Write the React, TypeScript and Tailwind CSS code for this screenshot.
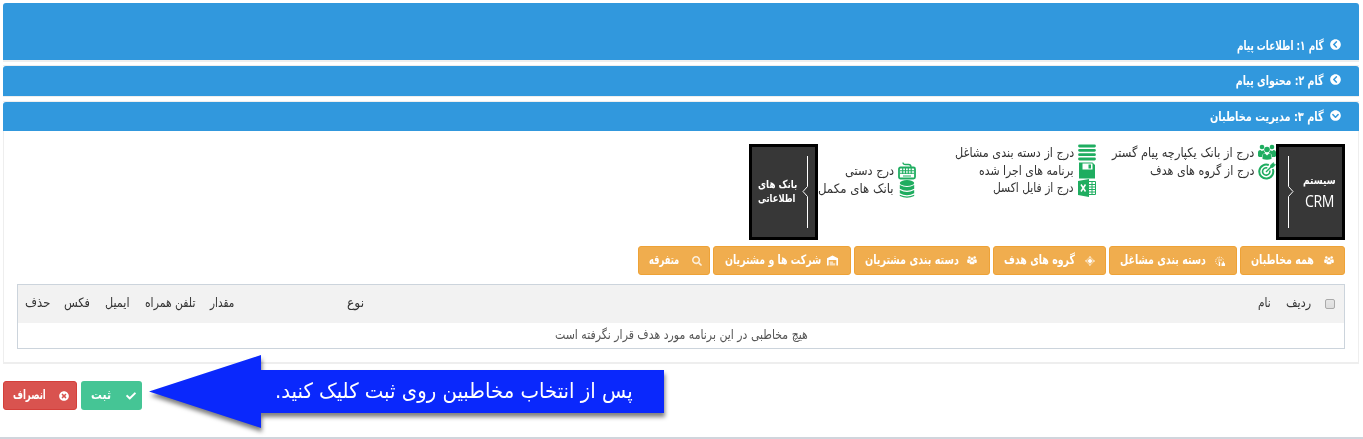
import React, { useLayoutEffect, useRef, useState } from "react";
import { FaCheck, FaSearch, FaChevronCircleLeft, FaChevronCircleDown, FaTimesCircle } from "react-icons/fa";

/** One line of text, condensed or widened horizontally to the given width. */
function Fit({ w, className = "", children }: { w: number; className?: string; children: string }) {
  const ref = useRef<HTMLSpanElement>(null);
  const [scale, setScale] = useState(1);
  useLayoutEffect(() => {
    if (ref.current) setScale(w / ref.current.offsetWidth);
  }, [w]);
  return (
    <span className={`flex shrink-0 items-center justify-start whitespace-nowrap ${className}`} style={{ width: w }}>
      <span ref={ref} className="inline-block shrink-0 origin-right" style={{ transform: `scaleX(${scale})` }}>
        {children}
      </span>
    </span>
  );
}

const Group = ({ className = "h-[17px] w-[18px]" }: { className?: string }) => (
  <svg viewBox="0 0 18 17" className={className} fill="currentColor">
    <circle cx="4" cy="3" r="2.3" /><circle cx="14" cy="3" r="2.3" /><circle cx="9" cy="5.5" r="2.8" />
    <path d="M0 12V8.500Q0 6 2.500 6l1.500 1.300L5.300 6q.8 1.700 2 3Q4 9.500 4 13H1zM18 12V8.500Q18 6 15.500 6L14 7.300 12.700 6q-.8 1.700-2 3 3.300.5 3.300 4h3z" />
    <path d="M4.500 15v-2.500Q4.500 9.700 7 9.500l2 2 2-2q2.500.2 2.500 3V15Q9 16.500 4.500 15z" />
  </svg>
);
const Target = () => (
  <svg viewBox="0 0 18 18" className="h-[18px] w-[18px]" fill="none" stroke="currentColor">
    <path d="M14.800 7a7 7 0 1 1-4-4" strokeWidth="2" /><path d="M11.800 8.500a3.700 3.700 0 1 1-2.500-2.600" strokeWidth="1.600" />
    <path d="M8 10l6.500-6.500" strokeWidth="1.500" /><path d="M12.500 5.500V3L15.500.5l.5 1.700 1.700.4-2.700 2.900z" fill="currentColor" strokeWidth=".5" />
  </svg>
);
const Lines = () => (
  <svg viewBox="0 0 18 17" className="h-[17px] w-[18px]" stroke="currentColor" strokeWidth="2.800" strokeLinecap="round">
    <path d="M1.500 2h15M1.500 6.300h15M1.500 10.700h15M1.500 15h15" />
  </svg>
);
const Disk = () => (
  <svg viewBox="0 0 18 17" className="h-[17px] w-[18px]" fill="currentColor">
    <path fillRule="evenodd" d="M1 .5h13.500L17 3v13.500H1zM4.500 1.500v6h10v-6zM10.500 2.500h2.500v4h-2.500z" />
  </svg>
);
const Excel = () => (
  <svg viewBox="0 0 18 18" className="h-[18px] w-[18px]" fill="currentColor">
    <path d="M0 2L11 0v18L0 16z" /><path d="M3 5.500l4.500 7M7.500 5.500L3 12.500" stroke="white" strokeWidth="1.500" />
    <path fill="none" stroke="currentColor" d="M11 2.500h6.500v13H11M11 5.500h6M11 8h6M11 10.500h6M11 13h6M14 3v12" />
  </svg>
);
const Keyboard = () => (
  <svg viewBox="0 0 18 18" className="h-[18px] w-[18px]" fill="none" stroke="currentColor">
    <path d="M5 .5q0 2 2.500 2h3Q13 2.500 13 5" strokeWidth="1.300" /><rect x="1" y="5.500" width="16" height="11" rx="1.500" strokeWidth="1.800" />
    <path d="M2 8.700h14M2 11.300h14M5 14h8M4.700 6v6M7.500 6v6M10.300 6v6M13.200 6v6" strokeWidth="1.100" />
  </svg>
);
const Database = () => (
  <svg viewBox="0 0 18 18" className="h-[18px] w-[18px]" fill="currentColor">
    <ellipse cx="9" cy="3" rx="7.200" ry="3" />
    <path d="M1.800 5q7.200 3.800 14.400 0v3.700q-7.200 4-14.400 0zM1.800 10q7.200 3.800 14.400 0v3.300q-7.200 4-14.400 0zM1.800 14.700q7.200 3.600 14.400 0V16q-7.200 3.500-14.400 0z" />
  </svg>
);
const Diamond = () => (
  <svg viewBox="0 0 10 10" className="size-[10px]" fill="none" stroke="currentColor">
    <path d="M5 .7L9.300 5 5 9.300.7 5z" strokeWidth=".8" opacity=".75" /><path d="M5 0v10M0 5h10" strokeWidth=".8" opacity=".8" />
    <circle cx="5" cy="5" r="2" fill="currentColor" stroke="none" />
  </svg>
);
const Jobs = () => (
  <svg viewBox="0 0 10 10" className="size-[10px]" fill="none" stroke="currentColor">
    <path d="M3.500 9A4 4 0 1 1 8.500 4" strokeDasharray="1.200 .8" opacity=".8" /><path d="M4 2.500v3.500M6 3v2" opacity=".7" />
    <path d="M4.500 6v4" strokeWidth="1.300" /><path d="M8.300 5.500V10M6.500 8h3.500M6.500 9.500H10" strokeWidth="1.300" />
  </svg>
);
const Building = () => (
  <svg viewBox="0 0 10 10" className="size-[11px]" fill="currentColor">
    <path fillRule="evenodd" d="M0 3L5 .5 10 3v6.500H8.500V4.500h-7v5H0z" /><path d="M2.500 6h3v1.500h2v2h-5z" opacity=".6" />
  </svg>
);

function Entry({ icon, w, children }: { icon: React.ReactNode; w: number; children: string }) {
  return (
    <div className="flex h-[17.7px] items-center text-[#1fad60]">
      {icon}
      <Fit w={w} className="mr-1 pb-[1px] text-[13px] text-[#333]">{children}</Fit>
    </div>
  );
}

function StepBar({ tall, open, w, children }: { tall?: boolean; open?: boolean; w: number; children: string }) {
  return (
    <div className={`flex items-end rounded-t-[3px] bg-[#3198dd] pr-[18px] text-white ${tall ? "h-[57px]" : open ? "h-[29px]" : "h-[30px] pb-[1px]"}`}>
      <div className="flex h-[29px] items-center">
        {open ? <FaChevronCircleDown className="mb-[2px] size-[11px]" /> : <FaChevronCircleLeft className="mb-[2px] size-[11px]" />}
        <Fit w={w} className="mr-[6px] pb-[1px] text-[13px] font-bold">{children}</Fit>
      </div>
    </div>
  );
}

function Filter({ width, icon, w, gap, children }: { width: string; icon: React.ReactNode; w: number; gap: string; children: string }) {
  return (
    <button className={`flex h-[29px] items-center rounded-[3px] border border-[#eea236] bg-[#f0ad4e] pr-[9px] text-white ${width}`}>
      {icon}
      <Fit w={w} className={`pb-[2px] text-[13px] font-bold ${gap}`}>{children}</Fit>
    </button>
  );
}

function Bracket({ flip }: { flip?: boolean }) {
  return (
    <svg viewBox="0 0 8 72" className={`h-[72px] w-2 ${flip ? "" : "-scale-x-100"}`} fill="none" stroke="white">
      <path d="M6.500 0v30.500l-4.500 5 4.500 5V72" />
    </svg>
  );
}

export default function App() {
  return (
    <div dir="rtl" className="relative h-[439px] w-[1363px] overflow-hidden bg-white pt-[3px] pl-[3px] pr-[4px] font-['DejaVu_Sans','Noto_Sans',sans-serif] leading-none">
      <div className="border-b-2 border-[#eee]"><StepBar tall w={87}>گام ۱: اطلاعات پیام</StepBar></div>
      <div className="mt-[3px] border-y border-[#eee]"><StepBar w={88}>گام ۲: محتوای پیام</StepBar></div>
      <div className="mt-1 h-[263px] border-b-2 border-[#eee] border-t border-t-[#eee]">
        <StepBar open w={114}>گام ۳: مدیریت مخاطبان</StepBar>
        <div className="h-[231px] border-x border-[#eee] px-[13px] pt-[13px]">
          <div className="flex h-24">
            <div className="flex w-[69px] shrink-0 items-center border-[3px] border-black bg-[#373737] text-white">
              <div className="mr-[6px] flex w-[34px] flex-col items-center">
                <Fit w={33} className="text-[11px] font-bold">سیستم</Fit>
                <span dir="ltr" className="mt-[6px] flex w-[29px] justify-center">
                  <span className="scale-x-[0.88] font-['Open_Sans',sans-serif] text-[16px] leading-[18px] tracking-[-0.5px]">CRM</span>
                </span>
              </div>
              <div className="mr-[7px]"><Bracket /></div>
            </div>
            <div className="w-[180px]">
              <Entry icon={<Group />} w={142}>درج از بانک یکپارچه پیام گستر</Entry>
              <Entry icon={<Target />} w={104}>درج از گروه های هدف</Entry>
            </div>
            <div className="w-[180px]">
              <Entry icon={<Lines />} w={119}>درج از دسته بندی مشاغل</Entry>
              <Entry icon={<Disk />} w={95}>برنامه های اجرا شده</Entry>
              <Entry icon={<Excel />} w={81}>درج از فایل اکسل</Entry>
            </div>
            <div className="w-[98px] pt-[18px]">
              <Entry icon={<Keyboard />} w={49}>درج دستی</Entry>
              <Entry icon={<Database />} w={76}>بانک های مکمل</Entry>
            </div>
            <div className="flex w-[69px] shrink-0 items-center border-[3px] border-black bg-[#373737] text-white">
              <div className="mr-[6px]"><Bracket flip /></div>
              <div className="mr-[4px] flex flex-col gap-[3px] pb-[2px]">
                <Fit w={39} className="text-[11px] font-bold">بانک های</Fit>
                <Fit w={37} className="mr-[2px] text-[11px] font-bold">اطلاعاتی</Fit>
              </div>
            </div>
          </div>
          <div className="mt-[6px] flex gap-[3px]">
            <Filter width="w-[105px]" icon={<Group className="mr-[1px] h-[9px] w-[10px]" />} w={63} gap="mr-[10px]">همه مخاطبان</Filter>
            <Filter width="w-[128px]" icon={<span className="mr-[2px]"><Jobs /></span>} w={86} gap="mr-[9px]">دسته بندی مشاغل</Filter>
            <Filter width="w-[113px]" icon={<span className="mr-[1px]"><Diamond /></span>} w={71} gap="mr-[10px]">گروه های هدف</Filter>
            <Filter width="w-[136px]" icon={<Group className="mr-[3px] h-[9px] w-[10px]" />} w={94} gap="mr-[8px]">دسته بندی مشتریان</Filter>
            <Filter width="w-[138px]" icon={<span className="mr-[3px]"><Building /></span>} w={96} gap="mr-[6px]">شرکت ها و مشتریان</Filter>
            <Filter width="w-[72px]" icon={<FaSearch className="mr-[-2px] size-[10px] opacity-80" />} w={30} gap="mr-[13px]">متفرقه</Filter>
          </div>
          <div className="mt-[9px] h-[65px] border border-[#ccd4dc] text-[13px] text-[#333]">
            <div className="flex h-[38px] items-center bg-[#f2f2f2] pr-[9px] pb-[3px]">
              <span className="mt-[2px] size-[10px] rounded-[2px] border border-[#aaa] bg-gradient-to-b from-[#e6e6e6] to-[#ddd]" />
              <Fit w={25} className="mr-[14px]">ردیف</Fit>
              <Fit w={13} className="mr-[15px]">نام</Fit>
              <Fit w={17} className="mr-[894px]">نوع</Fit>
              <Fit w={24} className="mr-[113px]">مقدار</Fit>
              <Fit w={51} className="mr-[15px]">تلفن همراه</Fit>
              <Fit w={25} className="mr-[14px]">ایمیل</Fit>
              <Fit w={26} className="mr-[15px]">فکس</Fit>
              <Fit w={25} className="mr-[14px]">حذف</Fit>
            </div>
            <div className="flex h-[23px] items-center justify-center">
              <Fit w={253} className="text-[#555]">هیچ مخاطبی در این برنامه مورد هدف قرار نگرفته است</Fit>
            </div>
          </div>
        </div>
      </div>
      <div dir="ltr" className="mt-[17px] flex gap-1 text-[13px] font-bold text-white">
        <button className="flex h-[29px] w-[74px] items-center rounded-[3px] border border-[#d43f3a] bg-[#d9534f] pl-[9px]">
          <span dir="rtl" className="pb-[2px]"><Fit w={33}>انصراف</Fit></span>
          <FaTimesCircle className="ml-[13px] size-[10px]" />
        </button>
        <button className="flex h-[29px] w-[61px] items-center rounded-[3px] bg-[#45c595] pl-[10px]">
          <span dir="rtl" className="pb-[2px]"><Fit w={20}>ثبت</Fit></span>
          <FaCheck className="ml-[15px] size-[10px]" />
        </button>
      </div>
      <div dir="ltr" className="absolute left-[149px] top-[355px] h-[73px] w-[515px]">
        <svg viewBox="0 0 515 73" className="absolute inset-0 h-[73px] w-[515px] overflow-visible drop-shadow-[1px_4px_2px_rgba(0,0,0,0.5)]">
          <path fill="#0a28fc" d="M0 36.500L112 0v15h403v43H112v15z" />
        </svg>
        <div dir="rtl" className="relative ml-[126px] flex h-[72px] w-[358px] items-center text-white">
          <Fit w={358} className="text-[21px]">پس از انتخاب مخاطبین روی ثبت کلیک کنید.</Fit>
        </div>
      </div>
      <div className="absolute inset-x-0 bottom-0 h-[2px] bg-[#d0d5dc]" />
    </div>
  );
}
